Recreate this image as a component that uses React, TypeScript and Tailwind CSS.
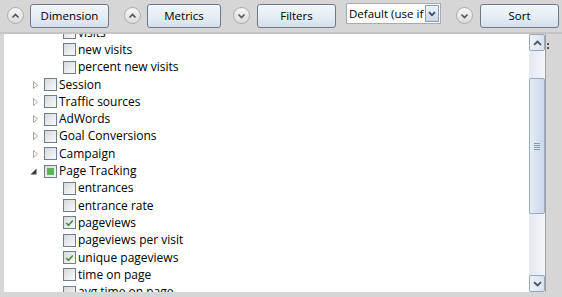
import { ReactNode } from 'react';

type Row = {
  label: string;
  level: number;
  expander?: 'closed' | 'open';
  state?: 'checked' | 'partial';
};

const rows: Row[] = [
  { label: 'visits', level: 1 },
  { label: 'new visits', level: 1 },
  { label: 'percent new visits', level: 1 },
  { label: 'Session', level: 0, expander: 'closed' },
  { label: 'Traffic sources', level: 0, expander: 'closed' },
  { label: 'AdWords', level: 0, expander: 'closed' },
  { label: 'Goal Conversions', level: 0, expander: 'closed' },
  { label: 'Campaign', level: 0, expander: 'closed' },
  { label: 'Page Tracking', level: 0, expander: 'open', state: 'partial' },
  { label: 'entrances', level: 1 },
  { label: 'entrance rate', level: 1 },
  { label: 'pageviews', level: 1, state: 'checked' },
  { label: 'pageviews per visit', level: 1 },
  { label: 'unique pageviews', level: 1, state: 'checked' },
  { label: 'time on page', level: 1 },
  { label: 'avg time on page', level: 1 },
];

function RoundButton({ down }: { down?: boolean }) {
  return (
    <div className="w-[17px] h-[17px] rounded-full border border-[#ababab] bg-gradient-to-b from-[#f6f6f6] to-[#dcdcdc] flex items-center justify-center shrink-0">
      <svg width="9" height="6" viewBox="0 0 9 6">
        <path
          d={down ? 'M1.5 1.5 L4.5 4.5 L7.5 1.5' : 'M1.5 4.5 L4.5 1.5 L7.5 4.5'}
          fill="none"
          stroke="#555"
          strokeWidth="1.6"
        />
      </svg>
    </div>
  );
}

function Button({ children, width }: { children: ReactNode; width: string }) {
  return (
    <div
      className={`${width} h-[24px] rounded-[3px] border border-[#707a86] bg-gradient-to-b from-[#f3f6fa] via-[#e6edf5] to-[#d6e0eb] flex items-center justify-center text-[11.5px] text-black shrink-0`}
    >
      {children}
    </div>
  );
}

function Checkbox({ state }: { state?: 'checked' | 'partial' }) {
  return (
    <div className="w-[13px] h-[13px] border border-[#6f7d8c] bg-gradient-to-br from-[#d6d9dd] to-[#fafafa] flex items-center justify-center shrink-0">
      {state === 'partial' && <div className="w-[7px] h-[7px] bg-[#5bb55b]" />}
      {state === 'checked' && (
        <svg width="9" height="8" viewBox="0 0 9 8">
          <path d="M1.2 4 L3.5 6.3 L7.8 1.5" fill="none" stroke="#3a9a3a" strokeWidth="1.7" />
        </svg>
      )}
    </div>
  );
}

function Expander({ kind }: { kind?: 'closed' | 'open' }) {
  if (kind === 'closed')
    return (
      <svg width="5" height="8" viewBox="0 0 5 8" className="ml-[5px]">
        <path d="M0.5 0.5 L4.5 4 L0.5 7.5 Z" fill="none" stroke="#a6a6a6" strokeWidth="1" />
      </svg>
    );
  if (kind === 'open')
    return (
      <svg width="7" height="7" viewBox="0 0 7 7" className="ml-[2px]">
        <path d="M6.5 0.5 L6.5 6.5 L0.5 6.5 Z" fill="#3c3c3c" />
      </svg>
    );
  return null;
}

function TreeRow({ row }: { row: Row }) {
  return (
    <div className="h-[17.3px] flex items-center" style={{ paddingLeft: 24 + row.level * 19 }}>
      <div className="w-[16px] flex items-center">
        <Expander kind={row.expander} />
      </div>
      <Checkbox state={row.state} />
      <span className="ml-[2px] text-[12px] text-black leading-none whitespace-nowrap">{row.label}</span>
    </div>
  );
}

function ScrollButton({ down }: { down?: boolean }) {
  return (
    <div className="h-[17px] rounded-[2px] border border-[#9aa6b5] bg-gradient-to-r from-[#eef3f9] to-[#d8e3f0] flex items-center justify-center">
      <svg width="9" height="6" viewBox="0 0 9 6">
        <path
          d={down ? 'M1 1.2 L4.5 4.5 L8 1.2' : 'M1 4.8 L4.5 1.5 L8 4.8'}
          fill="none"
          stroke="#4a5563"
          strokeWidth="1.8"
        />
      </svg>
    </div>
  );
}

export default function App() {
  return (
    <div className="w-[562px] h-[297px] bg-[#d6d6d6] flex flex-col overflow-hidden" style={{ fontFamily: '"Open Sans", "Noto Sans", sans-serif' }}>
      {/* toolbar */}
      <div className="h-[32px] flex items-center pl-[7px] pb-[1px]">
        <RoundButton />
        <div className="ml-[6px]"><Button width="w-[79px]">Dimension</Button></div>
        <div className="ml-[15px]"><RoundButton /></div>
        <div className="ml-[6px]"><Button width="w-[74px]">Metrics</Button></div>
        <div className="ml-[12px]"><RoundButton down /></div>
        <div className="ml-[7px]"><Button width="w-[79px]">Filters</Button></div>
        <div className="ml-[10px] w-[95px] h-[21px] border border-[#a5acb5] bg-white flex items-center justify-between mb-[4px]">
          <span className="pl-[2px] text-[11.5px] whitespace-nowrap">Default (use if</span>
          <div className="w-[14px] h-[17px] mr-[1px] border border-[#8b9cb0] bg-gradient-to-b from-[#eef3f9] to-[#cad8e8] flex items-center justify-center">
            <svg width="8" height="6" viewBox="0 0 8 6">
              <path d="M1 1.2 L4 4.3 L7 1.2" fill="none" stroke="#2d4a70" strokeWidth="1.8" />
            </svg>
          </div>
        </div>
        <div className="ml-[15px]"><RoundButton down /></div>
        <div className="ml-[7px]"><Button width="w-[79px]">Sort</Button></div>
      </div>
      <div className="h-[2px] bg-[#c4c4c4]" />

      {/* tree panel */}
      <div className="flex h-[258px]">
        <div className="w-[4px]" />
        <div className="w-[525px] bg-white overflow-hidden">
          <div className="-mt-[10px]">
            {rows.map((row) => (
              <TreeRow key={row.label} row={row} />
            ))}
          </div>
        </div>
        {/* scrollbar */}
        <div className="w-[17px] flex flex-col bg-gradient-to-r from-[#e3e9f1] to-[#f3f6fa] border-r border-[#a0a0a0]">
          <ScrollButton />
          <div className="flex-1 flex flex-col">
            <div className="h-[27px]" />
            <div className="h-[136px] rounded-[2px] border border-[#9aaac0] bg-gradient-to-r from-[#e4ecf6] to-[#c9d8ec] flex items-center justify-center">
              <div className="flex flex-col gap-[1px]">
                <div className="w-[6px] h-[1px] bg-[#8a9ab0]" />
                <div className="w-[6px] h-[1px] bg-[#8a9ab0]" />
                <div className="w-[6px] h-[1px] bg-[#8a9ab0]" />
                <div className="w-[6px] h-[1px] bg-[#8a9ab0]" />
              </div>
            </div>
          </div>
          <ScrollButton down />
        </div>
        <div className="flex-1 pt-[9px] pl-[1px]">
          <div className="flex flex-col gap-[2px]">
            <div className="w-[2px] h-[2px] bg-[#555]" />
            <div className="w-[2px] h-[2px] bg-[#555]" />
          </div>
        </div>
      </div>
    </div>
  );
}
